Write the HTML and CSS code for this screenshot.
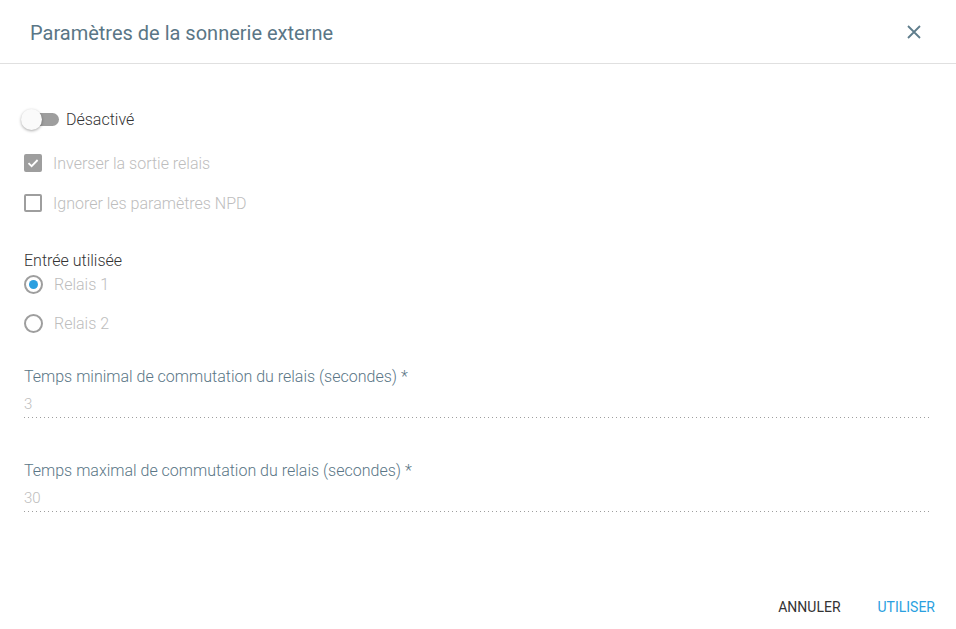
FILE: index.html
```html
<!DOCTYPE html>
<html lang="fr">
<head>
  <meta charset="UTF-8" />
  <title>Paramètres de la sonnerie externe</title>
  <link rel="stylesheet" href="styles.css">
</head>
<body>
  <div class="dialog">
    <div class="dialog-header">
      <h2>Paramètres de la sonnerie externe</h2>
      <button class="close" aria-label="Fermer">
        <svg width="14" height="14" viewBox="0 0 14 14"><path d="M1 1L13 13M13 1L1 13" stroke="#5f7d8c" stroke-width="1.8" fill="none"/></svg>
      </button>
    </div>

    <div class="dialog-body">
      <label class="toggle">
        <span class="track"><span class="thumb"></span></span>
        <span class="toggle-label">Désactivé</span>
      </label>

      <div class="checks">
        <label class="check disabled">
          <span class="box checked">
            <svg width="14" height="14" viewBox="0 0 14 14"><path d="M2.5 7.2L5.6 10.2L11.6 4" stroke="#fff" stroke-width="1.8" fill="none"/></svg>
          </span>
          Inverser la sortie relais
        </label>
        <label class="check disabled">
          <span class="box"></span>
          Ignorer les paramètres NPD
        </label>
      </div>

      <div class="radio-group">
        <div class="group-title">Entrée utilisée</div>
        <label class="radio disabled"><span class="circle on"></span>Relais 1</label>
        <label class="radio disabled"><span class="circle"></span>Relais 2</label>
      </div>

      <div class="field">
        <div class="field-label">Temps minimal de commutation du relais (secondes) *</div>
        <div class="field-value">3</div>
      </div>
      <div class="field">
        <div class="field-label">Temps maximal de commutation du relais (secondes) *</div>
        <div class="field-value">30</div>
      </div>
    </div>

    <div class="dialog-actions">
      <button class="btn">ANNULER</button>
      <button class="btn primary">UTILISER</button>
    </div>
  </div>
</body>
</html>
```

FILE: styles.css
```css
body {
  margin: 0;
  font-family: Roboto, "Liberation Sans", sans-serif;
  background: #fff;
  color: #333;
}
.dialog {
  width: 956px;
  height: 629px;
  display: flex;
  flex-direction: column;
}
.dialog-header {
  height: 64px;
  border-bottom: 1px solid #e0e0e0;
  display: flex;
  align-items: center;
  justify-content: space-between;
  padding: 0 35px 0 30px;
  box-sizing: border-box;
}
.dialog-header h2 {
  margin: 0;
  font-size: 20px;
  font-weight: 400;
  color: #5a7686;
  padding-top: 2px;
}
.close {
  border: none;
  background: none;
  padding: 0;
  width: 14px;
  height: 14px;
  cursor: pointer;
  display: flex;
}
.dialog-body {
  padding: 45px 27px 0 24px;
  flex: 1;
}
.toggle {
  display: flex;
  align-items: center;
  height: 20px;
}
.track {
  position: relative;
  width: 35px;
  height: 13px;
  border-radius: 7px;
  background: #9e9e9e;
}
.thumb {
  position: absolute;
  left: -3px;
  top: -4px;
  width: 21px;
  height: 21px;
  border-radius: 50%;
  background: #fafafa;
  box-shadow: 0 1px 3px rgba(0,0,0,0.35);
}
.toggle-label {
  margin-left: 7px;
  font-size: 16px;
  font-weight: 300;
  color: #333;
}
.checks {
  margin-top: 24px;
}
.check {
  display: flex;
  align-items: center;
  font-size: 16px;
  font-weight: 300;
  color: #bdbdbd;
  height: 20px;
  margin-bottom: 20px;
}
.box {
  width: 18px;
  height: 18px;
  box-sizing: border-box;
  border: 2px solid #9e9e9e;
  border-radius: 2px;
  margin-right: 11px;
  display: flex;
  align-items: center;
  justify-content: center;
}
.box.checked {
  background: #9e9e9e;
}
.radio-group {
  margin-top: 39px;
}
.group-title {
  font-size: 16px;
  font-weight: 300;
  color: #333;
  line-height: 18px;
  margin-bottom: 4px;
}
.radio {
  display: flex;
  align-items: center;
  font-size: 16px;
  font-weight: 300;
  color: #bdbdbd;
  height: 20px;
  margin-bottom: 19px;
}
.circle {
  width: 19px;
  height: 19px;
  box-sizing: border-box;
  border: 2px solid #9e9e9e;
  border-radius: 50%;
  margin-right: 11px;
  position: relative;
}
.circle.on::after {
  content: "";
  position: absolute;
  left: 3px;
  top: 3px;
  width: 9px;
  height: 9px;
  border-radius: 50%;
  background: #2a9fe0;
}
.field {
  margin-top: 34px;
}
.field + .field {
  margin-top: 43px;
}
.field-label {
  font-size: 16px;
  font-weight: 300;
  color: #5a7686;
  line-height: 20px;
}
.field-value {
  font-size: 15px;
  font-weight: 300;
  color: #bdbdbd;
  line-height: 20px;
  margin-top: 7px;
  padding-bottom: 4px;
  background-image: linear-gradient(to right, #9e9e9e 1px, transparent 1px);
  background-size: 4px 1px;
  background-repeat: repeat-x;
  background-position: left bottom;
}
.dialog-actions {
  display: flex;
  justify-content: flex-end;
  padding: 0 5px 9px 0;
  gap: 5px;
}
.btn {
  border: none;
  background: none;
  font-family: inherit;
  font-size: 14px;
  color: #333;
  padding: 5px 16px;
  cursor: pointer;
}
.btn.primary {
  color: #2a9fe0;
}
```
